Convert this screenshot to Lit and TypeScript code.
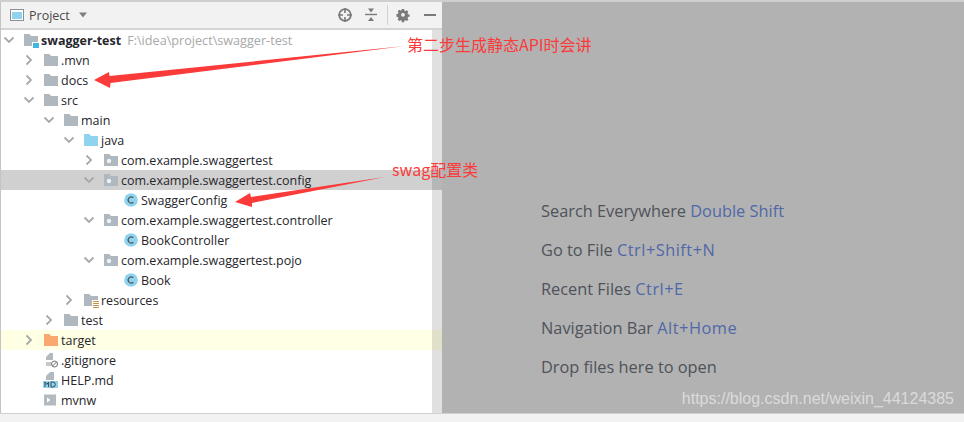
import { LitElement, html, css, svg } from "lit";
import { customElement } from "lit/decorators.js";

type Kind = "module" | "folder" | "source" | "package" | "class" | "resources" | "excluded" | "ignore" | "md" | "shell";
interface Row { level: number; chev?: "r" | "d"; kind: Kind; label: string; bold?: boolean; hint?: string; cls?: string; }

const rows: Row[] = [
  { level: 0, chev: "d", kind: "module", label: "swagger-test", bold: true, hint: "F:\\idea\\project\\swagger-test" },
  { level: 1, chev: "r", kind: "folder", label: ".mvn" },
  { level: 1, chev: "r", kind: "folder", label: "docs" },
  { level: 1, chev: "d", kind: "folder", label: "src" },
  { level: 2, chev: "d", kind: "folder", label: "main" },
  { level: 3, chev: "d", kind: "source", label: "java" },
  { level: 4, chev: "r", kind: "package", label: "com.example.swaggertest" },
  { level: 4, chev: "d", kind: "package", label: "com.example.swaggertest.config", cls: "sel" },
  { level: 5, kind: "class", label: "SwaggerConfig" },
  { level: 4, chev: "d", kind: "package", label: "com.example.swaggertest.controller" },
  { level: 5, kind: "class", label: "BookController" },
  { level: 4, chev: "d", kind: "package", label: "com.example.swaggertest.pojo" },
  { level: 5, kind: "class", label: "Book" },
  { level: 3, chev: "r", kind: "resources", label: "resources" },
  { level: 2, chev: "r", kind: "folder", label: "test" },
  { level: 1, chev: "r", kind: "excluded", label: "target", cls: "ignored" },
  { level: 1, kind: "ignore", label: ".gitignore" },
  { level: 1, kind: "md", label: "HELP.md" },
  { level: 1, kind: "shell", label: "mvnw" },
];

const FOLDER = "M1 2h5.500l1.500 2h7v10H1z";

function icon(kind: Kind) {
  let body;
  switch (kind) {
    case "module":
      body = svg`<path d=${FOLDER} fill="#afb8bf"/><rect x="9" y="10" width="7" height="6" fill="#fff"/><rect x="10" y="11" width="6" height="5" fill="#40b6e0"/>`;
      break;
    case "folder":
      body = svg`<path d=${FOLDER} fill="#afb8bf"/>`;
      break;
    case "source":
      body = svg`<path d=${FOLDER} fill="#8fd3ee"/>`;
      break;
    case "excluded":
      body = svg`<path d=${FOLDER} fill="#f9a870"/>`;
      break;
    case "package":
      body = svg`<path d=${FOLDER} fill="#afb8bf"/><circle cx="6" cy="9" r="2.200" fill="#eef1f3"/>`;
      break;
    case "resources":
      body = svg`<path d=${FOLDER} fill="#afb8bf"/><rect x="9" y="8" width="7" height="8" fill="#fff"/><path d="M10 9.500h6M10 11.500h6M10 13.500h6M10 15.500h6" stroke="#c9924a" stroke-width="1"/>`;
      break;
    case "class":
      body = svg`<circle cx="8" cy="8" r="6.800" fill="#8fd3ee"/><path d="M10.300 5.800A3 3 0 1 0 10.300 10.200" fill="none" stroke="#4d5a63" stroke-width="1.300"/>`;
      break;
    case "ignore":
      body = svg`<path d="M7 1h3v7H3V5z" fill="#b3babf"/><path d="M3 10h5v4H3z" fill="#c4c9cd"/><circle cx="11.500" cy="12" r="3" fill="#fff" stroke="#6e6e6e" stroke-width="1"/><path d="M9.500 14l4-4" stroke="#6e6e6e" stroke-width="1"/>`;
      break;
    case "md":
      body = svg`<path d="M7 0h4v8H3V4z" fill="#b3babf"/><rect x="0" y="9" width="15" height="7" fill="#8fd3ee"/><path d="M2 15v-5l1.800 2.500L5.600 10v5M8 10h1.800a2.500 2.500 0 0 1 0 5H8z" fill="none" stroke="#3c4a55" stroke-width="1"/>`;
      break;
    case "shell":
      body = svg`<rect x="1" y="2.500" width="12" height="11" fill="#b3babf"/><path d="M4 5.500l3.500 2.500L4 10.500z" fill="#fff"/>`;
      break;
  }
  return html`<svg class="ico" width="16" height="16" viewBox="0 0 16 16">${body}</svg>`;
}

function chevron(dir?: "r" | "d") {
  if (!dir) return html`<span class="chev"></span>`;
  const d = dir === "r" ? "M5.500 3.500l4.500 4.500-4.500 4.500" : "M3.500 5.500l4.500 4.500 4.500-4.500";
  return html`<svg class="chev" width="16" height="16" viewBox="0 0 16 16"><path d=${d} fill="none" stroke="#a9a9a9" stroke-width="1.800"/></svg>`;
}

@customElement("app-root")
export class AppRoot extends LitElement {
  static styles = css`
    :host { display: block; width: 964px; height: 422px; overflow: hidden; position: relative; background: #f2f2f2;
      font-family: "Open Sans", "Noto Sans CJK SC", sans-serif; }
    .main { display: flex; height: 413px; border-top: 2px solid #cfcfcf; box-sizing: border-box; }
    .left { width: 442px; flex: none; display: flex; flex-direction: column; border-left: 1px solid #c4c4c4; box-sizing: border-box; background: #fff; position: relative; }
    .head { height: 26px; flex: none; display: flex; align-items: center; background: #f2f2f2; border-bottom: 2px solid #d4d4d4; box-sizing: content-box; padding-left: 8px; }
    .title { font-size: 12.5px; color: #4a4a4a; margin-left: 4px; }
    .caret { margin-left: 8px; }
    .tools { margin-left: auto; display: flex; align-items: center; margin-right: 4px; gap: 10px; }
    .sep { width: 1px; height: 20px; background: #d0d0d0; margin: 0 -2px; }
    .gear { margin-right: 1px; margin-left: -1px; }
    .tree { flex: 1; }
    .row { height: 20px; display: flex; align-items: center; font-size: 12.5px; color: #26262c; white-space: nowrap; }
    .row.sel { background: #d0d0d0; }
    .row.ignored { background: #ffffe4; }
    .chev { width: 16px; height: 16px; flex: none; }
    .ico { flex: none; margin: 0 2px 0 6px; }
    .bold { font-weight: 700; }
    .hint { color: #a8a8a8; margin-left: 6px; font-size: 12.65px; }
    .scroll { position: absolute; top: 28px; bottom: 0; right: 0; width: 10px; background: rgba(0, 0, 0, 0.12); }
    .right { flex: 1; background: #b2b2b2; display: flex; flex-direction: column; padding: 198px 0 0 99px; gap: 17px; position: relative; }
    .line { font-size: 16.35px; line-height: 22px; color: #4f535a; white-space: nowrap; }
    .line b { font-weight: 400; color: #5068a8; }
    .line b.p { letter-spacing: 0.5px; }
    .bottom { height: 9px; background: #f2f2f2; border-top: 1px solid #d0d0d0; box-sizing: border-box; }
    .mark { position: absolute; right: 10px; top: 390px; font: 16px "Liberation Sans", sans-serif; color: rgba(255,255,255,.55); }
    .arrows { position: absolute; left: 0; top: 0; pointer-events: none; }
    .note { position: absolute; font-size: 16px; line-height: 22px; color: #fb3a3a; font-family: "Noto Sans CJK SC", sans-serif; white-space: nowrap; }
    .n1 { left: 407px; top: 33px; }
    .n2 { left: 392px; top: 158px; }
  `;

  render() {
    return html`
      <div class="main">
        <div class="left">
          <div class="head">
            <svg width="16" height="16" viewBox="0 0 16 16"><rect x="1.500" y="2.500" width="13" height="11" fill="#fff" stroke="#8a9299"/><rect x="3" y="5" width="10" height="7" fill="#8fd3ee"/></svg>
            <span class="title">Project</span>
            <svg class="caret" width="10" height="8" viewBox="0 0 10 8"><path d="M1 1.500h8L5 6.500z" fill="#7f7f7f"/></svg>
            <div class="tools">
              <svg width="16" height="16" viewBox="0 0 16 16"><circle cx="8" cy="8" r="5.800" fill="none" stroke="#7a7a7a" stroke-width="1.800"/><path d="M8 1v5M8 10v5M1 8h5M10 8h5" stroke="#7a7a7a" stroke-width="1.600"/></svg>
              <svg width="16" height="16" viewBox="0 0 16 16"><path d="M2 7.500h12" stroke="#7a7a7a" stroke-width="1.400"/><path d="M5 1.500h6L8 5.500zM5 14h6L8 10z" fill="#7a7a7a"/></svg>
              <div class="sep"></div>
              <svg class="gear" width="16" height="16" viewBox="0 0 16 16"><path fill-rule="evenodd" fill="#7a7a7a" d="M6.700 1.500h2.600l.4 1.900 1.200.5 1.600-1 1.800 1.800-1 1.600.5 1.200 1.900.4v2.600l-1.900.4-.5 1.200 1 1.600-1.800 1.800-1.600-1-1.200.5-.4 1.900H6.700l-.4-1.900-1.200-.5-1.600 1-1.800-1.800 1-1.600-.5-1.200-1.900-.4V7.300l1.900-.4.5-1.200-1-1.600 1.800-1.800 1.600 1 1.200-.5zM8 6a2.300 2.300 0 1 0 0 4.600A2.300 2.300 0 0 0 8 6z" transform="translate(1.200 .8) scale(.85)"/></svg>
              <svg width="16" height="16" viewBox="0 0 16 16"><path d="M2 8h12" stroke="#7a7a7a" stroke-width="2"/></svg>
            </div>
          </div>
          <div class="tree">
            ${rows.map(
              (r) => html`<div class="row ${r.cls ?? ""}">
                <span style="width:${r.level * 20}px;flex:none"></span>
                ${chevron(r.chev)}${icon(r.kind)}
                <span class=${r.bold ? "bold" : ""}>${r.label}</span>
                ${r.hint ? html`<span class="hint">${r.hint}</span>` : ""}
              </div>`
            )}
          </div>
          <div class="scroll"></div>
        </div>
        <div class="right">
          <div class="line">Search Everywhere <b>Double Shift</b></div>
          <div class="line">Go to File <b class="p">Ctrl+Shift+N</b></div>
          <div class="line">Recent Files <b class="p">Ctrl+E</b></div>
          <div class="line">Navigation Bar <b class="p">Alt+Home</b></div>
          <div class="line">Drop files here to open</div>
        </div>
      </div>
      <div class="bottom"></div>
      <div class="mark">https://blog.csdn.net/weixin_44124385</div>
      <svg class="arrows" width="964" height="422" viewBox="0 0 964 422">
        <path d="M94 80L109 72L109.500 76L405 46L110.500 83L110 88z" fill="#fb3a3a"/>
        <path d="M235 202L250 193L251 197L385 177L252 203L252 207z" fill="#fb3a3a"/>
      </svg>
      <div class="note n1">第二步生成静态API时会讲</div>
      <div class="note n2">swag配置类</div>
    `;
  }
}
